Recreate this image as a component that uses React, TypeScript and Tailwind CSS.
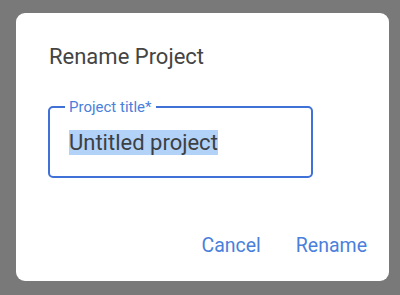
export default function App() {
  return (
    <div className="w-[400px] h-[295px] bg-[#797979] pt-[13px] pl-[16px] overflow-hidden" style={{ fontFamily: 'Roboto, "Liberation Sans", sans-serif' }}>
      <div className="w-[373px] h-[268px] bg-white rounded-[9px] pt-[30px] pl-[32px] pr-[22px] flex flex-col">
        <h2 className="text-[22px] leading-[28px] text-[#444444] pl-[1px]">Rename Project</h2>
        <fieldset className="mt-[26px] w-[265px] border-2 border-[#3f71d6] rounded-[5px] pl-[15px] pr-3 pt-[13px] pb-[20px]">
          <legend className="px-1 text-[15px] leading-[20px] text-[#4a7fdc]">Project title*</legend>
          <div className="pl-1 text-[22px] leading-[26px] text-[#3c4043]">
            <span className="bg-[#b3d2f8]">Untitled project</span>
          </div>
        </fieldset>
        <div className="mt-[56px] flex justify-end gap-[35px] text-[19.5px] leading-[24px] text-[#4a7fdc]">
          <button type="button">Cancel</button>
          <button type="button">Rename</button>
        </div>
      </div>
    </div>
  );
}
